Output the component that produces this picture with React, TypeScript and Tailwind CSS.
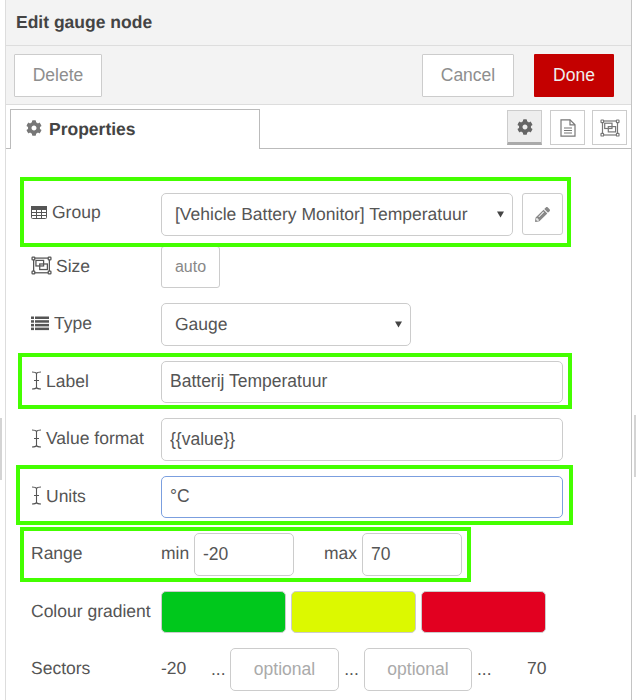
import React from "react";
import { FaCog, FaPencilAlt } from "react-icons/fa";

const ObjIcon = ({ size = 20, color = "#777" }: { size?: number; color?: string }) => (
  <svg width={size} height={size * 0.9} viewBox="0 0 20 18" fill="none" stroke={color} strokeWidth="1.2" className="shrink-0">
    <rect x="2.5" y="2" width="15" height="14" />
    <rect x="4.7" y="4.2" width="7.3" height="5.3" />
    <rect x="8.3" y="7.6" width="7.3" height="5.3" />
    <rect x="1" y="1" width="2.6" height="2.6" rx="0.6" fill="#fff" />
    <rect x="16.4" y="1" width="2.6" height="2.6" rx="0.6" fill="#fff" />
    <rect x="1" y="14.4" width="2.6" height="2.6" rx="0.6" fill="#fff" />
    <rect x="16.4" y="14.4" width="2.6" height="2.6" rx="0.6" fill="#fff" />
  </svg>
);

const TableIcon = () => (
  <svg width="16" height="13" viewBox="0 0 16 13" fill="none" stroke="#555" strokeWidth="1" className="shrink-0 mr-[1px]">
    <rect x="0.5" y="0.5" width="15" height="12" rx="1" />
    <rect x="0.5" y="0.5" width="15" height="3" fill="#555" />
    <path d="M0.5 6.5H15.5M0.5 9.5H15.5M5.5 3.5V12.5M10.5 3.5V12.5" />
  </svg>
);

const ListIcon = () => (
  <svg width="18" height="15" viewBox="0 0 18 15" fill="#555" className="shrink-0 mr-[1px]">
    <rect x="0" y="0.5" width="3" height="2.5" />
    <rect x="4" y="0.5" width="14" height="2.5" />
    <rect x="0" y="4.2" width="3" height="2.5" />
    <rect x="4" y="4.2" width="14" height="2.5" />
    <rect x="0" y="7.9" width="3" height="2.5" />
    <rect x="4" y="7.9" width="14" height="2.5" />
    <rect x="0" y="11.6" width="3" height="2.5" />
    <rect x="4" y="11.6" width="14" height="2.5" />
  </svg>
);

const Cursor = () => (
  <svg width="11" height="19" viewBox="0 0 11 19" fill="none" stroke="#555" strokeWidth="1.1" className="shrink-0">
    <path d="M1 1C3 1 4.8 1.2 5.5 2.4C6.2 1.2 8 1 10 1M5.5 2.4V16.6M3 9.5H8M1 18C3 18 4.8 17.8 5.5 16.6C6.2 17.8 8 18 10 18" />
  </svg>
);

const FileIcon = () => (
  <svg width="16" height="18" viewBox="0 0 16 18" fill="none" stroke="#777" strokeWidth="1.2">
    <path d="M1 0.8H10L15 5.8V17.2H1Z" />
    <path d="M10 0.8V5.8H15" />
    <path d="M4 9H12M4 11.5H12M4 14H12" />
  </svg>
);

const Caret = () => (
  <svg width="7" height="7" viewBox="0 0 7 7" className="mt-[1px]">
    <path d="M0 0.5H7L3.5 6.5Z" fill="#444" />
  </svg>
);

const Green = ({ className }: { className: string }) => (
  <div className={"absolute border-[4px] border-[#44ff00] pointer-events-none " + className} />
);

const Label = ({ icon, up, children }: { icon?: React.ReactNode; up?: boolean; children: React.ReactNode }) => (
  <div className={"w-[130px] shrink-0 flex items-center gap-[4px] text-[17.5px] text-[#555] " + (up ? "-mt-[4px]" : "-mt-[2px]")}>
    {icon}
    <span>{children}</span>
  </div>
);

const inputBase =
  "h-[42.5px] bg-white border rounded-[5px] px-[8px] text-[17.5px] text-[#555] outline-none";
const inputCls = inputBase + " border-[#ccc]";

export default function App() {
  return (
    <div className="relative w-[636px] h-[700px] overflow-hidden flex bg-white font-['Liberation_Sans',Arial,sans-serif] [text-rendering:geometricPrecision]">
      <div className="absolute left-0 top-[418px] w-[2px] h-[62px] bg-[#d4d4d4]" />
      <div className="absolute right-0 top-[415px] w-[2px] h-[62px] bg-[#d4d4d4]" />
      <div className="w-[5px] shrink-0" />
      <div className="w-[627px] shrink-0 border-x border-[#c4c4c4] border-l-[#ddd] flex flex-col">
        <div className="h-[46px] shrink-0 bg-[#f3f3f3] border-b border-[#ddd] pl-[10px] flex items-center text-[17.5px] font-bold text-[#444]">
          Edit gauge node
        </div>
        <div className="h-[59px] shrink-0 bg-[#f3f3f3] border-b border-[#ddd] pl-[8px] pr-[17px] flex items-center justify-between">
          <button className="w-[88px] h-[43px] bg-white border border-[#ccc] text-[17.5px] text-[#8e8e8e] rounded-[1px]">Delete</button>
          <div className="flex gap-[20px]">
            <button className="w-[92px] h-[43px] bg-white border border-[#ccc] text-[17.5px] text-[#8e8e8e] rounded-[1px]">Cancel</button>
            <button className="w-[80px] h-[43px] bg-[#c40000] text-[17.5px] text-[#eee] rounded-[1px]">Done</button>
          </div>
        </div>
        <div className="relative h-[44px] shrink-0 border-b border-[#bbb] flex items-end pl-[4px] pr-[4px] justify-between">
          <div className="relative -mb-px h-[40px] w-[250px] bg-white border border-b-0 border-[#bbb] flex items-start pt-[6px] pl-[15px] gap-[7px] text-[17.5px] font-bold text-[#444]">
            <FaCog className="text-[#777] w-[16px] h-[16px] mt-[4px]" />
            <span>Properties</span>
          </div>
          <div className="flex pb-[3px]">
            <div className="w-[35px] h-[35px] bg-[#eee] border border-[#ccc] border-b-[3px] border-b-[#aaa] flex items-center justify-center">
              <FaCog className="text-[#666] w-[16px] h-[16px]" />
            </div>
            <div className="ml-[8px] w-[35px] h-[35px] bg-white border border-[#ccc] flex items-center justify-center">
              <FileIcon />
            </div>
            <div className="ml-[7px] w-[35px] h-[35px] bg-white border border-[#ccc] flex items-center justify-center">
              <ObjIcon />
            </div>
          </div>
        </div>

        <div className="pt-[44px] pl-[25px] flex flex-col">
          <div className="relative flex items-center h-[42.5px] mb-[10px]">
            <Green className="left-[-11px] w-[551px] top-[-16px] h-[70px]" />
            <Label up icon={<TableIcon />}>Group</Label>
            <div className={inputCls + " w-[352px] flex items-center justify-between pl-[13px] pr-[8px]"}>
              <span className="-mt-[1px]">[Vehicle Battery Monitor] Temperatuur</span>
              <Caret />
            </div>
            <button className="ml-[9px] w-[41px] h-[42px] bg-white border border-[#ccc] rounded-[3px] flex items-center justify-center">
              <FaPencilAlt className="text-[#888] w-[15px] h-[15px]" />
            </button>
          </div>

          <div className="flex items-center h-[42.5px] mb-[15px]">
            <Label icon={<ObjIcon size={21} color="#555" />}>Size</Label>
            <button className="w-[59px] h-[42.5px] bg-white border border-[#ccc] rounded-[3px] text-[16px] text-[#888]">auto</button>
          </div>

          <div className="flex items-center h-[42.5px] mb-[15px]">
            <Label icon={<ListIcon />}>Type</Label>
            <div className={inputCls + " w-[250px] flex items-center justify-between pl-[13px] pr-[8px]"}>
              <span>Gauge</span>
              <Caret />
            </div>
          </div>

          <div className="relative flex items-center h-[42.5px] mb-[15px]">
            <Green className="left-[-13px] w-[554px] top-[-8px] h-[56px]" />
            <Label icon={<Cursor />}>Label</Label>
            <input readOnly value="Batterij Temperatuur" className={inputCls + " w-[402px]"} />
          </div>

          <div className="flex items-center h-[42.5px] mb-[15px]">
            <Label icon={<Cursor />}>Value format</Label>
            <input readOnly value="{{value}}" className={inputCls + " w-[402px]"} />
          </div>

          <div className="relative flex items-center h-[42.5px] mb-[15px]">
            <Green className="left-[-15px] w-[557px] top-[-11px] h-[60px]" />
            <Label icon={<Cursor />}>Units</Label>
            <input readOnly value="°C" className={inputBase + " w-[402px] border-[#7b9fdf]"} />
          </div>

          <div className="relative flex items-center h-[42.5px] mb-[15px]">
            <Green className="left-[-11px] w-[451px] top-[-6px] h-[55px]" />
            <Label>Range</Label>
            <span className="w-[33px] text-[17.5px] text-[#555] -mt-[2px]">min</span>
            <input readOnly value="-20" className={inputCls + " w-[100px]"} />
            <span className="ml-[30px] w-[38px] text-[17.5px] text-[#555] -mt-[2px]">max</span>
            <input readOnly value="70" className={inputCls + " w-[100px]"} />
          </div>

          <div className="flex items-center h-[42.5px] mb-[15px]">
            <Label>Colour gradient</Label>
            <div className="flex gap-[5px]">
              <div className="w-[125px] h-[42.5px] rounded-[5px] border border-[#ccc] bg-[#00c81c]" />
              <div className="w-[125px] h-[42.5px] rounded-[5px] border border-[#ccc] bg-[#dcf900]" />
              <div className="w-[125px] h-[42.5px] rounded-[5px] border border-[#ccc] bg-[#e20020]" />
            </div>
          </div>

          <div className="flex items-center h-[42.5px] text-[17.5px] text-[#555]">
            <Label>Sectors</Label>
            <span className="w-[50px] -mt-[2px]">-20</span>
            <span className="w-[19px]">...</span>
            <input readOnly placeholder="optional" className={inputCls + " w-[109px] text-center placeholder:text-[#aaa]"} />
            <span className="w-[25px] text-center">...</span>
            <input readOnly placeholder="optional" className={inputCls + " w-[108px] text-center placeholder:text-[#aaa]"} />
            <span className="ml-[5px] w-[50px]">...</span>
            <span className="-mt-[2px]">70</span>
          </div>
        </div>
      </div>
    </div>
  );
}
